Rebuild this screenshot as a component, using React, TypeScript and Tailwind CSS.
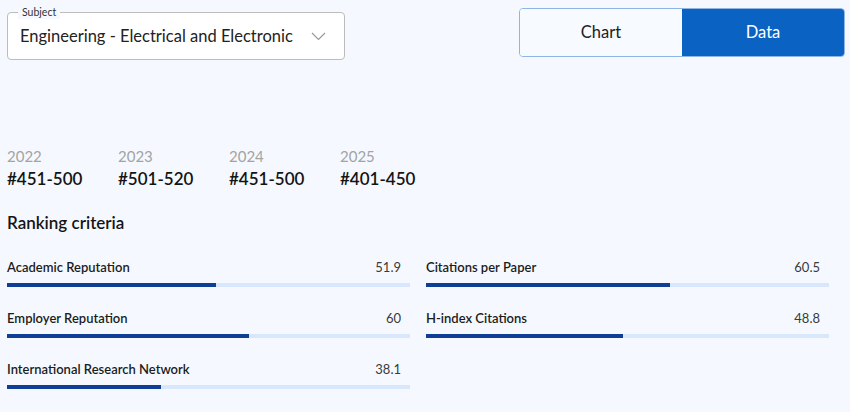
import React from 'react';

type Criterion = { name: string; score: number };

const leftCriteria: Criterion[] = [
  { name: 'Academic Reputation', score: 51.9 },
  { name: 'Employer Reputation', score: 60 },
  { name: 'International Research Network', score: 38.1 },
];

const rightCriteria: Criterion[] = [
  { name: 'Citations per Paper', score: 60.5 },
  { name: 'H-index Citations', score: 48.8 },
];

const ranks = [
  { year: '2022', rank: '#451-500' },
  { year: '2023', rank: '#501-520' },
  { year: '2024', rank: '#451-500' },
  { year: '2025', rank: '#401-450' },
];

const CriterionRow: React.FC<{ item: Criterion }> = ({ item }) => (
  <div className="h-[51px] pt-[10px]">
    <div className="flex items-center justify-between pr-[9px] text-[13px] leading-[18px]">
      <span className="whitespace-nowrap font-semibold text-[#1c1c1c]">{item.name}</span>
      <span className="text-[#3a3a3a]">{item.score}</span>
    </div>
    <div className="mt-[7px] h-[4px] w-full bg-[#d8e7fb]">
      <div className="h-full bg-[#0f3f95]" style={{ width: `${item.score}%` }} />
    </div>
  </div>
);

export default function App() {
  return (
    <div
      className="h-[412px] w-[850px] overflow-hidden bg-[#f5f9ff] pl-[7px] text-[#1a1a1a]"
      style={{ fontFamily: 'Lato, "Noto Sans", sans-serif' }}
    >
      <div className="flex items-start justify-between pr-[5px] pt-[8px]">
        <div className="relative mt-[4px] flex h-[48px] w-[338px] items-center justify-between rounded-[4px] border border-[#bcbcbc] bg-white pl-[12px] pr-[18px]">
          <span className="absolute -top-[8px] left-[10px] bg-[#f5f9ff] px-[4px] text-[10.5px] leading-[14px] text-[#333]">
            Subject
          </span>
          <span className="whitespace-nowrap text-[16.5px] text-[#222]">Engineering - Electrical and Electronic</span>
          <svg width="15" height="9" viewBox="0 0 15 9" fill="none" stroke="#9a9a9a" strokeWidth="1.2">
            <path d="M1 1l6.5 6.5L14 1" />
          </svg>
        </div>
        <div className="flex h-[49px] w-[326px] overflow-hidden rounded-[4px] border border-[#8fb5e6]">
          <div className="flex flex-1 items-center justify-center bg-[#f7fbff] text-[16.5px] text-[#222]">Chart</div>
          <div className="flex flex-1 items-center justify-center bg-[#0a63c2] text-[16.5px] text-white">Data</div>
        </div>
      </div>

      <div className="mt-[86px] flex">
        {ranks.map((r) => (
          <div key={r.year} className="w-[111px]">
            <div className="text-[15px] leading-[20px] text-[#a3a3a3]">{r.year}</div>
            <div className="mt-[2px] text-[17px] font-semibold leading-[22px] text-[#141414]">{r.rank}</div>
          </div>
        ))}
      </div>

      <div className="mt-[22px] text-[17px] font-semibold leading-[22px] text-[#141414]">Ranking criteria</div>

      <div className="mt-[14px] flex gap-[16px]">
        <div className="w-[403px]">
          {leftCriteria.map((c) => (
            <CriterionRow key={c.name} item={c} />
          ))}
        </div>
        <div className="w-[403px]">
          {rightCriteria.map((c) => (
            <CriterionRow key={c.name} item={c} />
          ))}
        </div>
      </div>
    </div>
  );
}
